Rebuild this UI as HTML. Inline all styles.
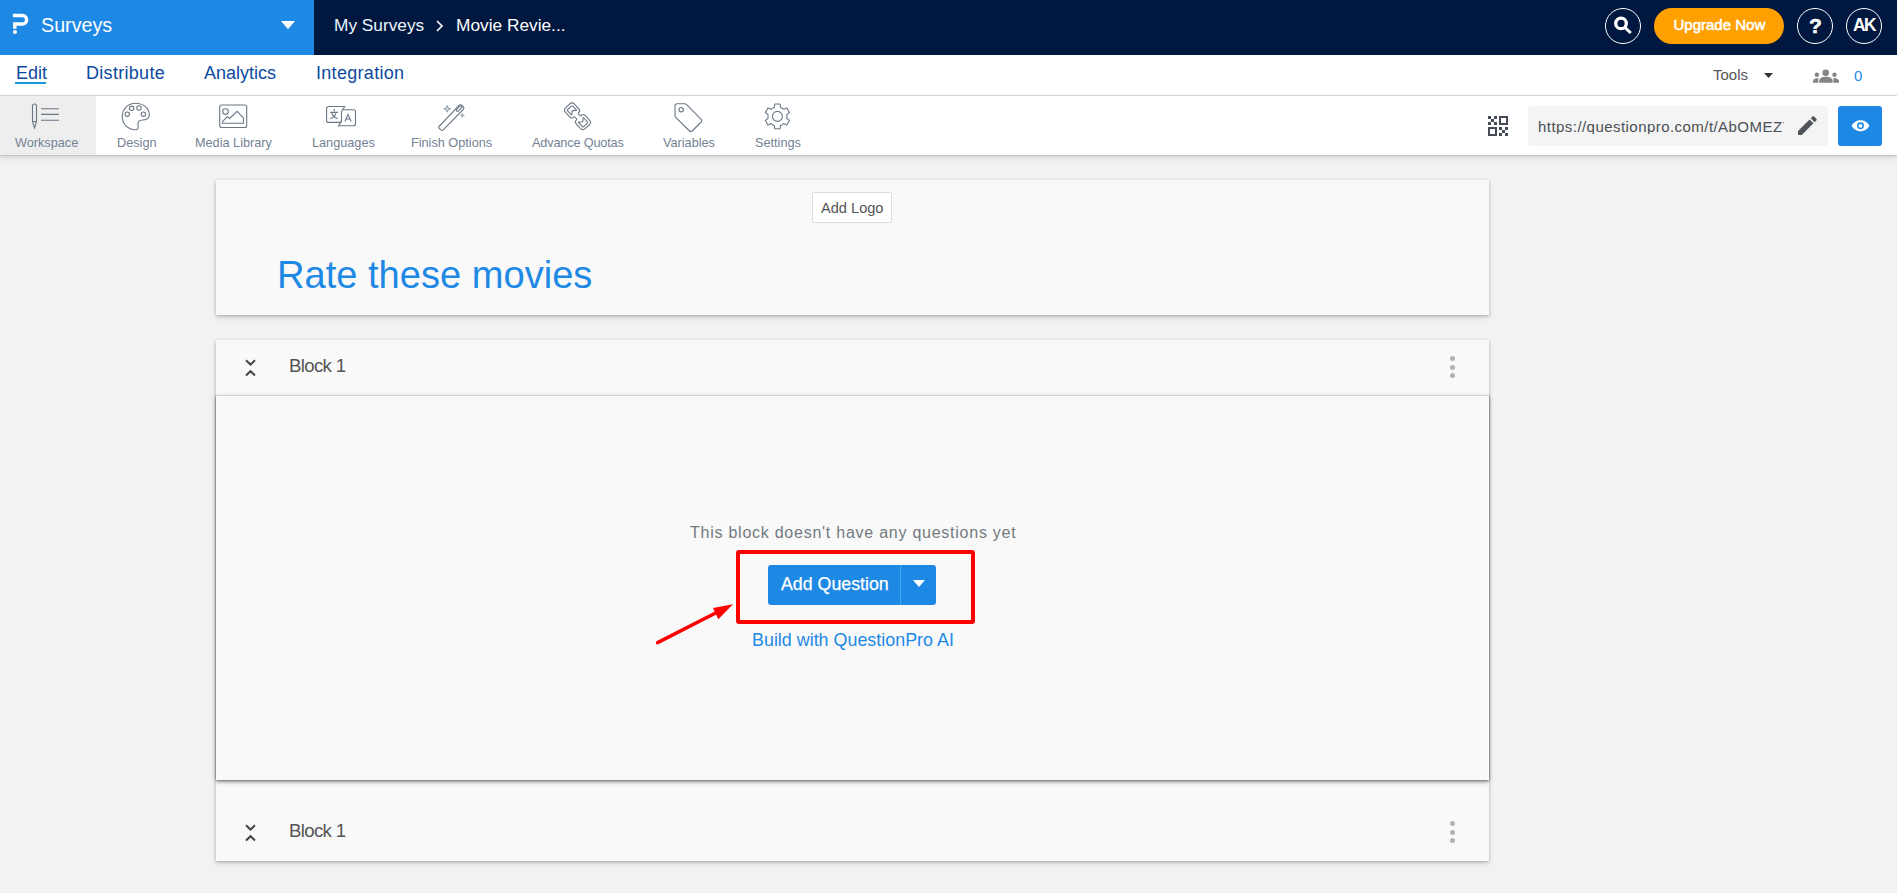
<!DOCTYPE html>
<html><head><meta charset="utf-8">
<style>
*{box-sizing:border-box;margin:0;padding:0}
html,body{width:1897px;height:893px;overflow:hidden;background:#f2f2f2;font-family:"Liberation Sans",sans-serif}
.abs{position:absolute}
.t{position:absolute;white-space:nowrap;line-height:1}
svg{position:absolute;overflow:visible}
#top{position:absolute;left:0;top:0;width:1897px;height:55px;background:#001840}
#brand{position:absolute;left:0;top:0;width:314px;height:55px;background:#1e88e5}
#nav{position:absolute;left:0;top:55px;width:1897px;height:41px;background:#fff;border-bottom:1px solid #dcdcdc}
#tb{position:absolute;left:0;top:96px;width:1897px;height:59px;background:#fff;box-shadow:0 1px 1px rgba(0,0,0,.1),0 2px 6px rgba(0,0,0,.15)}
.lbl{position:absolute;white-space:nowrap;line-height:1;font-size:12.7px;color:#738294;top:41px}
.ic{stroke:#6b7785;fill:none;stroke-width:1.1}
.circ{position:absolute;top:8px;width:36px;height:36px;border:1px solid #fff;border-radius:50%}
.card{position:absolute;left:216px;width:1273px;background:#f9f9f9;box-shadow:0 1px 3px rgba(0,0,0,.24),0 3px 6px rgba(0,0,0,.09)}
.dots i{position:absolute;left:0;width:5px;height:5px;border-radius:50%;background:#b3b3b3}
</style></head><body>
<div id="top">
  <div id="brand">
    <svg style="left:0;top:0" width="40" height="40" viewBox="0 0 40 40">
      <path d="M12.85 15.5 H22.4 A4.25 4.25 0 0 1 22.4 24 H14.8 V28.7" fill="none" stroke="#fff" stroke-width="3.4"/>
      <circle cx="15" cy="32" r="2" fill="#fff"/>
    </svg>
    <div class="t" style="left:41px;top:16px;font-size:19.7px;color:#fff">Surveys</div>
    <svg style="left:280.7px;top:21px" width="14" height="8" viewBox="0 0 14 8"><path d="M0.8 0.5 H13.2 L7 7.6Z" fill="#fff" stroke="#fff" stroke-width="1" stroke-linejoin="round"/></svg>
  </div>
  <div class="t" style="left:334px;top:17px;font-size:17.3px;color:#eaf6ff">My Surveys</div>
  <svg style="left:435.5px;top:20px" width="7" height="12" viewBox="0 0 7 12"><path d="M1 1 L6 6 L1 11" fill="none" stroke="#fff" stroke-width="1.6"/></svg>
  <div class="t" style="left:456px;top:17px;font-size:17.3px;color:#fff">Movie Revie...</div>

  <div class="circ" style="left:1605px"></div>
  <svg style="left:1614px;top:18px" width="18" height="17" viewBox="0 0 18 17">
    <circle cx="7" cy="5.4" r="5.3" fill="none" stroke="#fff" stroke-width="3.3"/>
    <path d="M11 9.6 L16.8 15" stroke="#fff" stroke-width="3"/>
  </svg>
  <div class="abs" style="left:1654px;top:8px;width:130px;height:36px;border-radius:18px;background:#ffa000"></div>
  <div class="t" style="left:1673.5px;top:16.5px;font-size:15px;color:#fff;-webkit-text-stroke:.55px #fff">Upgrade Now</div>
  <div class="circ" style="left:1797px"></div>
  <div class="t" style="left:1809px;top:15px;font-size:21px;font-weight:bold;color:#fff;-webkit-text-stroke:.6px #fff">?</div>
  <div class="circ" style="left:1846px"></div>
  <div class="t" style="left:1853px;top:17px;font-size:17.5px;font-weight:bold;color:#fff;letter-spacing:-1.6px">AK</div>
</div>

<div id="nav">
  <div class="t" style="left:16px;top:9px;font-size:18px;color:#0b4aa0">Edit</div>
  <div class="abs" style="left:15px;top:27px;width:31px;height:2px;background:#1a98d5"></div>
  <div class="t" style="left:86px;top:9px;font-size:18px;letter-spacing:.3px;color:#0b4aa0">Distribute</div>
  <div class="t" style="left:204px;top:9px;font-size:18px;color:#0b4aa0">Analytics</div>
  <div class="t" style="left:316px;top:9px;font-size:18px;letter-spacing:.3px;color:#0b4aa0">Integration</div>

  <div class="t" style="left:1713px;top:12px;font-size:15px;color:#555">Tools</div>
  <svg style="left:1764px;top:18px" width="9" height="5" viewBox="0 0 9 5"><path d="M0 0H9L4.5 5Z" fill="#333"/></svg>
  <svg style="left:1813px;top:15px" width="26" height="13" viewBox="0 0 26 13" fill="#858585">
    <circle cx="12.7" cy="2.8" r="3.3"/>
    <path d="M6.2 12.7 V11 C6.2 8.2 9 6.8 12.9 6.8 C16.8 6.8 19.6 8.2 19.6 11 V12.7Z"/>
    <circle cx="3.9" cy="4.8" r="2.2"/>
    <path d="M0 12.7 V11.5 C0 9.5 1.8 8.1 5.3 8.1 L5.3 12.7Z"/>
    <circle cx="21.5" cy="4.8" r="2.2"/>
    <path d="M26 12.7 V11.5 C26 9.5 24.2 8.1 20.3 8.1 L20.3 12.7Z"/>
  </svg>
  <div class="t" style="left:1854px;top:13px;font-size:15px;color:#1e88e5">0</div>
</div>

<div id="tb">
  <div class="abs" style="left:0;top:0;width:96px;height:59px;background:#eeeeee"></div>
  <!-- workspace -->
  <svg style="left:32px;top:8px" width="28" height="26" viewBox="0 0 28 26">
    <path class="ic" d="M0.5 17.5 V2 A2 2 0 0 1 4.5 2 V17.5 L2.5 24 Z M0.5 17.5 H4.5"/>
    <path class="ic" d="M9 4.8 H27 M9 10.4 H27 M9 16.2 H27" stroke-width="1.3"/>
  </svg>
  <div class="lbl" style="left:15px">Workspace</div>
  <!-- design -->
  <svg style="left:121px;top:6px" width="30" height="30" viewBox="0 0 30 30">
    <path class="ic" d="M14.5 1.2 C22.5 1.2 28.3 6.5 28.3 12.5 C28.3 16.5 25.5 17.8 22 18 C18.5 18.2 16.5 19.5 17 22.5 C17.5 25.5 17 27.8 14.3 27.8 C7 27.8 1.2 22 1.2 14.5 C1.2 7 7 1.2 14.5 1.2Z"/>
    <circle class="ic" cx="10.6" cy="6.3" r="2.2"/><circle class="ic" cx="18" cy="6" r="2.2"/>
    <circle class="ic" cx="6.2" cy="12.2" r="2.2"/><circle class="ic" cx="22.4" cy="12.2" r="2.2"/>
  </svg>
  <div class="lbl" style="left:117px">Design</div>
  <!-- media -->
  <svg style="left:219px;top:104px;top:8px" width="29" height="25" viewBox="0 0 29 25">
    <rect class="ic" x="0.7" y="1" width="27" height="22.5" rx="2"/>
    <circle class="ic" cx="6.5" cy="7.6" r="2.8"/>
    <path class="ic" d="M3.4 17.6 L8.5 12.5 L10.4 14.7 L18.1 7.3 L24.4 13.9 V19.5 H3.4Z"/>
    <path d="M3.4 19.2 H24.4" stroke="#9aa3ad" stroke-width="1.2"/>
  </svg>
  <div class="lbl" style="left:195px">Media Library</div>
  <!-- languages -->
  <svg style="left:320px;top:4px" width="40" height="30" viewBox="0 0 40 30">
    <path class="ic" d="M21.5 11.5 V20.3 Q21.5 22.4 19.5 22.4 H8.6 Q6.6 22.4 6.6 20.4 V8.5 Q6.6 6.45 8.6 6.45 H24.7 L21.5 11.5"/>
    <path class="ic" d="M22.6 9.7 H33.5 Q35.5 9.7 35.5 11.7 V23.8 Q35.5 25.8 33.5 25.8 H18.5 L21.5 21.5"/>
    <path class="ic" d="M14.3 9 V11.2 M10.2 12.4 H17.9 M11.8 13.3 Q13.5 17.5 17.6 18.6 M15.8 13.3 Q14.5 17.5 10.2 18.5"/>
    <path class="ic" d="M25 21.5 L28 14.3 L31.2 21.5 M26.1 19 H30.1"/>
  </svg>
  <div class="lbl" style="left:312px">Languages</div>
  <!-- finish -->
  <svg style="left:438px;top:6px" width="28" height="29" viewBox="0 0 28 29">
    <path class="ic" d="M1 24.5 L21 3.5 A2 2 0 0 1 24 3.3 L25.3 4.6 A2 2 0 0 1 25.2 7.5 L5 28 A1.3 1.3 0 0 1 3 28 L1.1 26.2 A1.2 1.2 0 0 1 1 24.5Z"/>
    <rect class="ic" x="-3.3" y="-1.2" width="6.6" height="2.4" rx="0.8" transform="translate(21.1 6.6) rotate(-46)"/>
    <path d="M9.3 3.5 L10.2 5.9 L12.7 6.8 L10.2 7.7 L9.3 10.2 L8.4 7.7 L5.9 6.8 L8.4 5.9Z" fill="#dde1e6" stroke="#8d97a3" stroke-width="1"/>
    <path d="M24.3 11.3 L24.9 12.8 L26.4 13.4 L24.9 14 L24.3 15.5 L23.7 14 L22.2 13.4 L23.7 12.8Z" fill="#a9b1ba" stroke="#a9b1ba" stroke-width=".8"/>
  </svg>
  <div class="lbl" style="left:411px">Finish Options</div>
  <!-- quotas -->
  <svg style="left:560px;top:2px" width="34" height="36" viewBox="0 0 34 36">
<path class="ic" d="M14.43 6.06 L18.38 10.30 Q20.56 12.64 19.21 13.90 L18.59 14.48 Q17.86 15.16 18.54 15.90 L19.97 17.43 Q20.65 18.16 21.38 17.48 L22.01 16.90 Q23.36 15.64 25.54 17.98 L29.50 22.22 Q31.68 24.56 29.34 26.74 L25.10 30.70 Q22.76 32.88 20.57 30.54 L16.62 26.30 Q14.44 23.96 15.79 22.70 L16.41 22.12 Q17.14 21.44 16.46 20.70 L15.03 19.17 Q14.35 18.44 13.62 19.12 L12.99 19.70 Q11.64 20.96 9.46 18.62 L5.50 14.38 Q3.32 12.04 5.66 9.86 L9.90 5.90 Q12.24 3.72 14.43 6.06Z"/>
<path class="ic" d="M12.80 8.12 L16.48 12.07 Q16.89 12.51 16.29 12.53 L12.71 12.62 Q12.21 12.63 12.17 13.13 L11.83 16.69 Q11.77 17.29 11.36 16.85 L7.68 12.90 Q6.99 12.17 7.73 11.48 L11.38 8.07 Q12.11 7.39 12.80 8.12Z"/>
<path class="ic" d="M22.20 28.48 L18.52 24.53 Q18.11 24.09 18.71 24.07 L22.29 23.98 Q22.79 23.97 22.83 23.47 L23.17 19.91 Q23.23 19.31 23.64 19.75 L27.32 23.70 Q28.01 24.43 27.27 25.12 L23.62 28.53 Q22.89 29.21 22.20 28.48Z"/>
  </svg>
  <div class="lbl" style="left:532px;letter-spacing:-.15px">Advance Quotas</div>
  <!-- variables -->
  <svg style="left:674px;top:6.5px" width="29" height="30" viewBox="0 0 29 30">
    <path class="ic" d="M1 3 A2.2 2.2 0 0 1 3.2 0.8 H10.5 A3 3 0 0 1 12.6 1.7 L27.2 16.3 A2 2 0 0 1 27.2 19 L18.2 28 A2 2 0 0 1 15.5 28 L1.8 14.3 A2.5 2.5 0 0 1 1 12.5Z"/>
    <circle class="ic" cx="7.2" cy="6.7" r="2.2"/>
  </svg>
  <div class="lbl" style="left:663px">Variables</div>
  <!-- settings -->
  <svg style="left:764px;top:7px" width="27" height="27" viewBox="0 0 27 27">
    <path class="ic" stroke-linejoin="round" d="M8.65 5.17 L10.31 4.42 L10.76 0.98 L16.04 0.98 L16.49 4.42 L18.15 5.17 L19.63 6.23 L22.84 4.90 L25.48 9.48 L22.73 11.59 L22.90 13.40 L22.73 15.21 L25.48 17.32 L22.84 21.90 L19.63 20.57 L18.15 21.63 L16.49 22.38 L16.04 25.82 L10.76 25.82 L10.31 22.38 L8.65 21.63 L7.17 20.57 L3.96 21.90 L1.32 17.32 L4.07 15.21 L3.90 13.40 L4.07 11.59 L1.32 9.48 L3.96 4.90 L7.17 6.23Z"/>
    <circle class="ic" cx="13.4" cy="13.4" r="5"/>
  </svg>
  <div class="lbl" style="left:755px">Settings</div>

  <!-- qr -->
  <svg style="left:1488px;top:20px" width="21" height="21" viewBox="0 0 21 21" fill="#454c55">
    <rect x="0" y="0" width="3" height="3"/><rect x="6" y="0" width="3" height="3"/><rect x="3" y="3" width="3" height="3"/><rect x="0" y="6" width="3" height="3"/><rect x="6" y="6" width="3" height="3"/>
    <path d="M11 0H20V9H11Z M13 2V7H18V2Z" fill-rule="evenodd"/>
    <path d="M0 11H9V20H0Z M2 13V18H7V13Z" fill-rule="evenodd"/>
    <rect x="11" y="11" width="3" height="3"/><rect x="17" y="11" width="3" height="3"/><rect x="14" y="14" width="3" height="3"/><rect x="11" y="17" width="3" height="3"/><rect x="17" y="17" width="3" height="3"/>
  </svg>
  <div class="abs" style="left:1528px;top:10px;width:300px;height:40px;background:#f4f4f4;border-radius:4px;overflow:hidden">
    <div class="t" style="left:10px;top:12.5px;font-size:15px;color:#4a4f55;width:246px;overflow:hidden;letter-spacing:.45px">https://questionpro.com/t/AbOMEZ7</div>
  </div>
  <svg style="left:1798px;top:17.5px" width="22" height="22" viewBox="0 0 20 20" fill="#50555c">
    <path d="M0 15.5 V19 H3.5 L14 8.5 L10.5 5 Z M16.7 5.8 A1 1 0 0 0 16.7 4.4 L14.6 2.3 A1 1 0 0 0 13.2 2.3 L11.6 3.9 L15.1 7.4 Z"/>
  </svg>
  <div class="abs" style="left:1838px;top:10px;width:44px;height:40px;background:#1e88e5;border-radius:3px"></div>
  <svg style="left:1851px;top:24px" width="19" height="11.6" viewBox="0 0 18 11">
    <path d="M0.5 5.5 C3 1.5 6 0.3 9 0.3 C12 0.3 15 1.5 17.5 5.5 C15 9.5 12 10.7 9 10.7 C6 10.7 3 9.5 0.5 5.5Z" fill="#fff"/>
    <circle cx="9" cy="5.5" r="3.3" fill="#1e88e5"/><circle cx="9" cy="5.5" r="1.8" fill="#fff"/>
  </svg>
</div>

<!-- title card -->
<div class="card" style="top:180px;height:135px">
  <div class="abs" style="left:596px;top:12px;width:80px;height:31px;background:#fff;border:1px solid #dedede;border-radius:2px"></div>
  <div class="t" style="left:605px;top:21px;font-size:14.6px;color:#555">Add Logo</div>
  <div class="t" style="left:61px;top:76px;font-size:38.1px;color:#1e88e5">Rate these movies</div>
</div>

<!-- block 1 -->
<div class="card" style="top:340px;height:440px;z-index:2">
  <div class="abs" style="left:0;top:56px;width:1273px;height:384px;background:#f9f9f9;box-shadow:-1px 0 1px rgba(0,0,0,.18),1px 0 1px rgba(0,0,0,.18),0 0 5px rgba(0,0,0,.16),0 2px 3px rgba(0,0,0,.2)"></div>
  <div class="abs" style="left:0;top:55px;width:1273px;height:1px;background:#d2d2d2"></div>
  <svg style="left:29px;top:19px" width="11" height="18" viewBox="0 0 11 18"><path d="M1 1.2 L5.5 5.5 L10 1.2 M1 16.5 L5.5 12.2 L10 16.5" fill="none" stroke="#444" stroke-width="2"/></svg>
  <div class="t" style="left:73px;top:17px;font-size:18.6px;letter-spacing:-.65px;color:#555">Block 1</div>
  <div class="dots abs" style="left:1234px;top:16px"><i style="top:0"></i><i style="top:8.5px"></i><i style="top:17px"></i></div>

  <div class="t" style="left:474px;top:185px;font-size:16px;color:#737980;letter-spacing:.75px">This block doesn't have any questions yet</div>
  <div class="abs" style="left:552px;top:225px;width:168px;height:40px;background:#1e88e5;border-radius:3px"></div>
  <div class="abs" style="left:684px;top:225px;width:1px;height:40px;background:#46a6f0"></div>
  <div class="t" style="left:565px;top:236px;font-size:17.8px;color:#fff;-webkit-text-stroke:.25px #fff">Add Question</div>
  <svg style="left:697px;top:240px" width="12" height="7" viewBox="0 0 12 7"><path d="M0 0H12L6 7Z" fill="#fff"/></svg>
  <div class="t" style="left:536px;top:292px;font-size:17.9px;color:#1e88e5">Build with QuestionPro AI</div>
</div>

<!-- bottom block -->
<div class="card" style="top:780px;height:81px;z-index:1">
  <svg style="left:29px;top:44px" width="11" height="18" viewBox="0 0 11 18"><path d="M1 1.2 L5.5 5.5 L10 1.2 M1 16.5 L5.5 12.2 L10 16.5" fill="none" stroke="#444" stroke-width="2"/></svg>
  <div class="t" style="left:73px;top:42px;font-size:18.6px;letter-spacing:-.65px;color:#555">Block 1</div>
  <div class="dots abs" style="left:1234px;top:41px"><i style="top:0"></i><i style="top:8.5px"></i><i style="top:17px"></i></div>
</div>

<!-- red annotation -->
<div class="abs" style="left:735.5px;top:549.5px;width:239.5px;height:74px;border:4px solid #ff0000;border-radius:3px;z-index:5"></div>
<svg style="left:0;top:0;z-index:5" width="1897" height="893" viewBox="0 0 1897 893">
  <path d="M657.6 642.6 L722 609.8" stroke="#ff0000" stroke-width="3.5" stroke-linecap="round"/>
  <path d="M733 604.3 L713 608 L718.3 619.2 Z" fill="#ff0000"/>
</svg>
</body></html>
